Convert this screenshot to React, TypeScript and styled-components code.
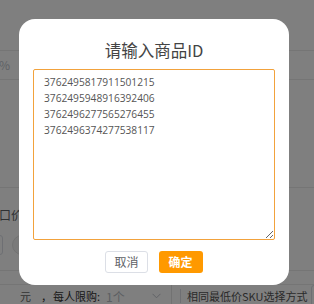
import React from "react";
import styled, { createGlobalStyle } from "styled-components";

const Global = createGlobalStyle`
  html, body { margin: 0; padding: 0; background: #fff; }
  body { font-family: "Noto Sans CJK SC", "Noto Sans", sans-serif; font-size: 12px; color: #606266; }
  * { box-sizing: border-box; }
`;

const Page = styled.div`
  width: 314px;
  height: 304px;
  overflow: hidden;
  display: flex;
  flex-direction: column;
`;

const Band = styled.div<{ $h: number; $line?: boolean }>`
  height: ${(p) => p.$h}px;
  flex: none;
  border-bottom: ${(p) => (p.$line ? "1px solid #ebebeb" : "none")};
  display: flex;
  align-items: center;
`;

const Suffix = styled.span`
  margin-left: -1px;
  color: #c0c4cc;
  font-size: 12px;
  line-height: 16px;
`;

const Form = styled.div`
  height: 83px;
  flex: none;
  border-bottom: 1px solid #ebebeb;
  padding-top: 17px;
  display: flex;
  flex-direction: column;
`;

const FieldLabel = styled.div`
  margin-left: -13px;
  height: 20px;
  line-height: 20px;
  color: #606266;
  font-size: 12px;
  white-space: nowrap;
`;

const Controls = styled.div`
  margin-top: 10px;
  height: 20px;
  display: flex;
  gap: 9px;
  margin-left: -40px;
`;

const InputBox = styled.div`
  width: 43px;
  height: 20px;
  border: 1px solid #dcdfe6;
  border-radius: 3px;
`;

const Pill = styled.div`
  width: 60px;
  height: 20px;
  border: 1px solid #e4e4e4;
  border-radius: 10px;
  background: #f5f5f5;
`;

const BottomRow = styled.div`
  height: 22px;
  flex: none;
  display: flex;
  align-items: center;
  padding-left: 20px;
  white-space: nowrap;
  font-size: 11px;
  & > * { flex: none; }
`;

const Unit = styled.span`
  color: #666;
  width: 21px;
`;

const Comma = styled.span`
  color: #333;
  width: 12px;
`;

const Strong = styled.span`
  color: #333;
`;

const SelectBox = styled.div`
  width: 72px;
  height: 22px;
  display: flex;
  align-items: center;
  justify-content: space-between;
  padding: 0 10px 0 6px;
  color: #b8bcc4;
  font-size: 12px;
  border-right: 1px solid #e4e4e4;
`;

const Divider = styled.span`
  width: 1px;
  height: 14px;
  background: #dcdfe6;
  margin: 0 6px 0 8px;
`;

const Label2 = styled.span`
  color: #555;
`;

const EndBox = styled.div`
  margin-left: 3px;
  width: 30px;
  height: 22px;
  border: 1px solid #dcdfe6;
  border-radius: 3px;
`;

const Overlay = styled.div`
  position: fixed;
  inset: 0;
  background: rgba(0, 0, 0, 0.5);
  display: flex;
  align-items: center;
  justify-content: center;
  padding-right: 6px;
`;

const Modal = styled.div`
  width: 270px;
  height: 266px;
  background: #fff;
  border-radius: 16px;
  display: flex;
  flex-direction: column;
  align-items: center;
  padding: 12px 14px 12px;
`;

const Title = styled.div`
  height: 38px;
  line-height: 38px;
  font-size: 16.5px;
  color: #444;
  font-family: "Noto Sans CJK SC", "Noto Sans", sans-serif;
`;

const Area = styled.textarea`
  width: 242px;
  height: 171px;
  flex: none;
  border: 1px solid #f2a23c;
  border-radius: 2px;
  padding: 4px 10px;
  font-family: "Open Sans", "Noto Sans CJK SC", sans-serif;
  font-size: 10.2px;
  line-height: 16px;
  color: #555;
  outline: none;
  margin: 0;
  background: #fff;
`;

const Actions = styled.div`
  margin-top: 11px;
  display: flex;
  gap: 11px;
`;

const Btn = styled.button<{ $primary?: boolean }>`
  height: 22px;
  margin: 0;
  padding: ${(p) => (p.$primary ? "0 10px" : "0 8px")};
  border: ${(p) => (p.$primary ? "none" : "1px solid #dcdfe6")};
  background: ${(p) => (p.$primary ? "#ff9900" : "#fff")};
  color: ${(p) => (p.$primary ? "#fff" : "#606266")};
  font-weight: ${(p) => (p.$primary ? 700 : 400)};
  border-radius: 3px;
  font-family: "Noto Sans CJK SC", sans-serif;
  font-size: 12px;
  line-height: 20px;
  cursor: pointer;
`;

const ids = [
  "3762495817911501215",
  "3762495948916392406",
  "3762496277565276455",
  "3762496374277538117",
];

export default function App() {
  return (
    <>
      <Global />
      <Page>
        <Band $h={51} $line />
        <Band $h={29} $line>
          <Suffix>%</Suffix>
        </Band>
        <Band $h={108} $line />
        <Form>
          <FieldLabel>一口价</FieldLabel>
          <Controls>
            <InputBox />
            <Pill />
          </Controls>
        </Form>
        <Band $h={14} $line />
        <BottomRow>
          <Unit>元</Unit>
          <Comma>，</Comma>
          <Strong>每人限购:</Strong>
          <SelectBox>
            <span>1个</span>
            <svg width="9" height="6" viewBox="0 0 9 6">
              <path d="M0.5 0.8 L4.5 4.8 L8.5 0.8" fill="none" stroke="#c0c4cc" strokeWidth="1" />
            </svg>
          </SelectBox>
          <Divider />
          <Label2>相同最低价SKU选择方式</Label2>
          <EndBox />
        </BottomRow>
      </Page>
      <Overlay>
        <Modal>
          <Title>请输入商品ID</Title>
          <Area readOnly value={ids.join("\n")} />
          <Actions>
            <Btn>取消</Btn>
            <Btn $primary>确定</Btn>
          </Actions>
        </Modal>
      </Overlay>
    </>
  );
}
